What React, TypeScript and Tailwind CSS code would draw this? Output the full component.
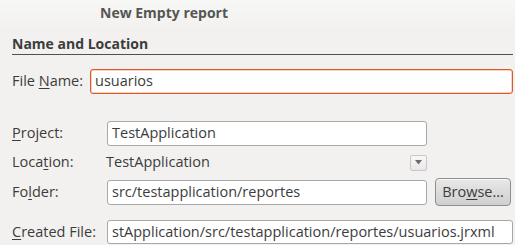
import React from "react";

const font = { fontFamily: '"Open Sans", "Noto Sans", sans-serif' };

function U({ children }: { children: React.ReactNode }) {
  return <span className="underline decoration-1 underline-offset-2">{children}</span>;
}

export default function App() {
  return (
    <div
      className="w-[515px] h-[245px] overflow-hidden bg-[#f2f1f0] text-[#3c3c3c] text-[14.5px] leading-none"
      style={font}
    >
      <div className="h-[30px] bg-gradient-to-b from-[#f7f7f6] to-[#f2f1f0] pl-[100px] pt-[6px]">
        <span className="font-bold text-[14px] text-[#555555]">New Empty report</span>
      </div>
      <div className="pl-[12px] pr-[2px]">
        <div className="mt-[7px] h-[18px] border-b border-[#505050] font-bold text-[#3c3c3c] text-[14px]">
          Name and Location
        </div>
        <div className="mt-[14px] flex items-center h-[25px]">
          <div className="w-[78px]">
            File <U>N</U>ame:
          </div>
          <div className="flex-1 h-[25px] rounded-[3px] border border-[#e0572a] bg-white flex items-center px-[4px] shadow-[inset_0_0_0_0.5px_#f4a58a]">
            usuarios
          </div>
        </div>
        <div className="mt-[27px] flex items-center h-[25px]">
          <div className="w-[95px]">
            <U>P</U>roject:
          </div>
          <div className="w-[320px] h-[25px] rounded-[3px] border border-[#a8a8a8] bg-white flex items-center px-[4px]">
            TestApplication
          </div>
        </div>
        <div className="mt-[4px] flex items-center h-[25px]">
          <div className="w-[94px]">
            Loca<U>t</U>ion:
          </div>
          <div className="w-[304px]">TestApplication</div>
          <div className="w-[17px] h-[16px] rounded-[2px] border border-[#c8c8c8] bg-gradient-to-b from-[#f8f8f8] to-[#e8e8e8] flex items-center justify-center">
            <svg width="7" height="5" viewBox="0 0 7 5">
              <path d="M0 0 H7 L3.5 4.5 Z" fill="#6a6a6a" />
            </svg>
          </div>
        </div>
        <div className="mt-[3px] flex items-center h-[28px]">
          <div className="w-[95px]">
            Fo<U>l</U>der:
          </div>
          <div className="w-[320px] h-[25px] rounded-[3px] border border-[#a8a8a8] bg-white flex items-center px-[4px]">
            src/testapplication/reportes
          </div>
          <div className="ml-[8px] w-[76px] h-[28px] rounded-[4px] border border-[#8e8e8e] bg-gradient-to-b from-[#e8e8e8] to-[#cfcfcf] flex items-center justify-center text-[#3c3c3c] shadow-[inset_0_1px_0_#f8f8f8]">
            Bro<U>w</U>se...
          </div>
        </div>
        <div className="mt-[14px] flex items-center h-[24px]">
          <div className="w-[95px]">
            <U>C</U>reated File:
          </div>
          <div className="flex-1 h-[24px] rounded-[3px] border border-[#a8a8a8] bg-white flex items-center px-[4px] overflow-hidden whitespace-nowrap">
            stApplication/src/testapplication/reportes/usuarios.jrxml
          </div>
        </div>
      </div>
    </div>
  );
}
